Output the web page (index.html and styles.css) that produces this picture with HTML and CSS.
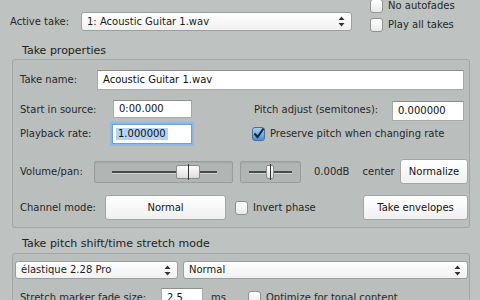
FILE: index.html
```html
<!DOCTYPE html>
<html>
<head>
<meta charset="utf-8">
<link rel="stylesheet" href="styles.css">
</head>
<body>
<div class="top">
  <span class="top-label">Active take:</span>
  <div class="select active-select">
    <span>1: Acoustic Guitar 1.wav</span>
    <svg class="arrows" width="7" height="11" viewBox="0 0 7 11"><path d="M3.5 0.5 L6.5 4 L0.5 4 Z M3.5 10.5 L6.5 7 L0.5 7 Z" fill="#333"/></svg>
  </div>
  <div class="top-checks">
    <label class="check"><span class="box"></span>No autofades</label>
    <label class="check"><span class="box"></span>Play all takes</label>
  </div>
</div>

<div class="group-title">Take properties</div>
<div class="group">
  <div class="row row1">
    <span class="lbl w-name">Take name:</span>
    <div class="input grow">Acoustic Guitar 1.wav</div>
  </div>
  <div class="row row2">
    <span class="lbl w-start">Start in source:</span>
    <div class="input w-start-in">0:00.000</div>
    <span class="lbl w-pitch">Pitch adjust (semitones):</span>
    <div class="input w-pitch-in">0.000000</div>
  </div>
  <div class="row row3">
    <span class="lbl w-rate">Playback rate:</span>
    <div class="input focus w-rate-in"><span class="sel">1.000000</span></div>
    <label class="check preserve"><span class="box checked"><svg width="13" height="13" viewBox="0 0 13 13"><path d="M2.5 6.5 L5.5 10 L11.5 1.5" fill="none" stroke="#12233a" stroke-width="2"/></svg></span>Preserve pitch when changing rate</label>
  </div>
  <div class="row row4">
    <span class="lbl w-vol">Volume/pan:</span>
    <div class="slider vol">
      <div class="track"></div>
      <div class="knob"></div>
    </div>
    <div class="slider pan">
      <div class="track"></div>
      <div class="knob"></div>
    </div>
    <span class="db">0.00dB</span>
    <span class="center">center</span>
    <div class="button normalize">Normalize</div>
  </div>
  <div class="row row5">
    <span class="lbl w-chan">Channel mode:</span>
    <div class="button chan">Normal</div>
    <label class="check invert"><span class="box"></span>Invert phase</label>
    <div class="button envelopes">Take envelopes</div>
  </div>
</div>

<div class="group-title title2">Take pitch shift/time stretch mode</div>
<div class="group group2">
  <div class="row srow">
    <div class="select elastique">
      <span>élastique 2.28 Pro</span>
      <svg class="arrows" width="7" height="11" viewBox="0 0 7 11"><path d="M3.5 0.5 L6.5 4 L0.5 4 Z M3.5 10.5 L6.5 7 L0.5 7 Z" fill="#333"/></svg>
    </div>
    <div class="select mode">
      <span>Normal</span>
      <svg class="arrows" width="7" height="11" viewBox="0 0 7 11"><path d="M3.5 0.5 L6.5 4 L0.5 4 Z M3.5 10.5 L6.5 7 L0.5 7 Z" fill="#333"/></svg>
    </div>
  </div>
  <div class="row fade">
    <span class="lbl w-fade">Stretch marker fade size:</span>
    <div class="input w-fade-in">2.5</div>
    <span class="ms">ms</span>
    <label class="check tonal"><span class="box"></span>Optimize for tonal content</label>
  </div>
</div>
</body>
</html>
```

FILE: styles.css
```css
html, body {
  margin: 0;
  padding: 0;
}
body {
  width: 480px;
  height: 300px;
  overflow: hidden;
  background: #bec2c1;
  font-family: "DejaVu Sans", "Liberation Sans", sans-serif;
  font-size: 10px;
  line-height: 12px;
  color: #262828;
}

.top {
  display: flex;
  align-items: flex-start;
  padding-left: 10px;
  height: 33px;
}
.top-label {
  margin-top: 16px;
  width: 71px;
}
.select {
  box-sizing: border-box;
  display: flex;
  align-items: center;
  justify-content: space-between;
  background: linear-gradient(#ffffff, #f1f1f1);
  border: 1px solid #9c9f9f;
  border-radius: 3px;
  padding: 0 6px 0 5px;
  color: #1c1c1c;
}
.active-select {
  margin-top: 12px;
  width: 271px;
  height: 19px;
}
.top-checks {
  display: flex;
  flex-direction: column;
  gap: 5px;
  margin-left: 18px;
  margin-top: -1px;
}
.check {
  display: flex;
  align-items: center;
  gap: 5px;
}
.box {
  box-sizing: border-box;
  display: inline-block;
  width: 13px;
  height: 14px;
  background: linear-gradient(#ffffff, #e9e9e9);
  border: 1px solid #8f9292;
  border-radius: 3px;
  flex: none;
}
.box.checked {
  background: linear-gradient(#a9cdf4, #4d8fd6);
  border-color: #4d6f96;
  position: relative;
}
.box.checked svg {
  position: absolute;
  left: -1px;
  top: -1px;
}

.group-title {
  padding: 12px 0 0 22px;
  height: 12px;
  margin-bottom: 2px;
  color: #222;
  font-size: 11px;
}
.group {
  box-sizing: border-box;
  margin: 0 10px 0 12px;
  border: 1px solid #a2a6a5;
  border-radius: 3px;
  background: #babebd;
  padding: 10px 1px 7px 7px;
}
.row {
  display: flex;
  align-items: center;
}
.lbl {
  flex: none;
}
.input {
  box-sizing: border-box;
  background: #fff;
  border: 1px solid #a8aaaa;
  border-top-color: #8e9090;
  height: 20px;
  padding: 0 5px;
  display: flex;
  align-items: center;
  color: #111;
}
.grow {
  flex: 1;
  margin-right: 4px;
}

.row1 { height: 20px; }
.w-name { width: 77px; }

.row2 { margin-top: 10px; height: 20px; }
.w-start { width: 93px; }
.w-start-in { width: 79px; height: 18px; margin-top: -2px; }
.w-pitch { width: 138px; margin-left: 62px; }
.w-pitch-in { width: 72px; margin-top: 1px; }

.row3 { margin-top: 4px; height: 20px; }
.w-rate { width: 92px; }
.w-rate-in {
  width: 80px;
  border-color: #6f9fd6;
  box-shadow: 0 0 0 2px #8fb8e6;
  padding-left: 3px;
}
.sel {
  background: #b5d3f3;
  padding: 0 2px;
}
.preserve { margin-left: 60px; }

.row4 { margin-top: 15px; height: 25px; }
.w-vol { width: 74px; }
.slider {
  box-sizing: border-box;
  position: relative;
  height: 22px;
  background: #b1b5b4;
  border: 1px solid #999d9c;
  border-radius: 2px;
  box-shadow: inset 0 1px 1px rgba(0,0,0,0.08);
}
.track {
  position: absolute;
  top: 9px;
  height: 2px;
  background: #4b4d4d;
  border-bottom: 1px solid #d0d3d2;
}
.knob {
  position: absolute;
  top: 3px;
  height: 14px;
  box-sizing: border-box;
  background: linear-gradient(#ffffff, #dcdcdc);
  border: 1px solid #8a8c8c;
  border-radius: 2px;
}
.knob::after {
  content: "";
  position: absolute;
  left: 50%;
  top: -2px;
  bottom: -2px;
  width: 1px;
  background: #333;
}
.vol { width: 139px; }
.vol .track { left: 17px; right: 15px; }
.vol .knob { left: 81px; width: 24px; }
.pan { width: 61px; margin-left: 7px; }
.pan .track { left: 8px; right: 8px; }
.pan .knob { left: 25px; width: 8px; }
.db { margin-left: 13px; }
.center { margin-left: 13px; }

.button {
  box-sizing: border-box;
  display: flex;
  align-items: center;
  justify-content: center;
  height: 25px;
  background: linear-gradient(#ffffff, #f0f0f0);
  border: 1px solid #a3a5a5;
  border-radius: 3px;
  color: #151515;
}
.normalize { width: 68px; margin-left: auto; }

.row5 { margin-top: 11px; height: 25px; }
.w-chan { width: 85px; }
.chan { width: 121px; }
.invert { margin-left: 9px; }
.envelopes { width: 105px; margin-left: auto; }

.title2 {
  padding-top: 10px;
  margin-bottom: 3px;
}
.group2 {
  padding: 7px 1px 10px 2px;
}
.srow { gap: 5px; }
.elastique { width: 163px; height: 18px; }
.mode { flex: 1; height: 18px; }
.fade { margin-top: 9px; padding-left: 5px; height: 20px; }
.w-fade { width: 141px; }
.w-fade-in { width: 42px; }
.ms { margin-left: 8px; }
.tonal { margin-left: 22px; }
```
